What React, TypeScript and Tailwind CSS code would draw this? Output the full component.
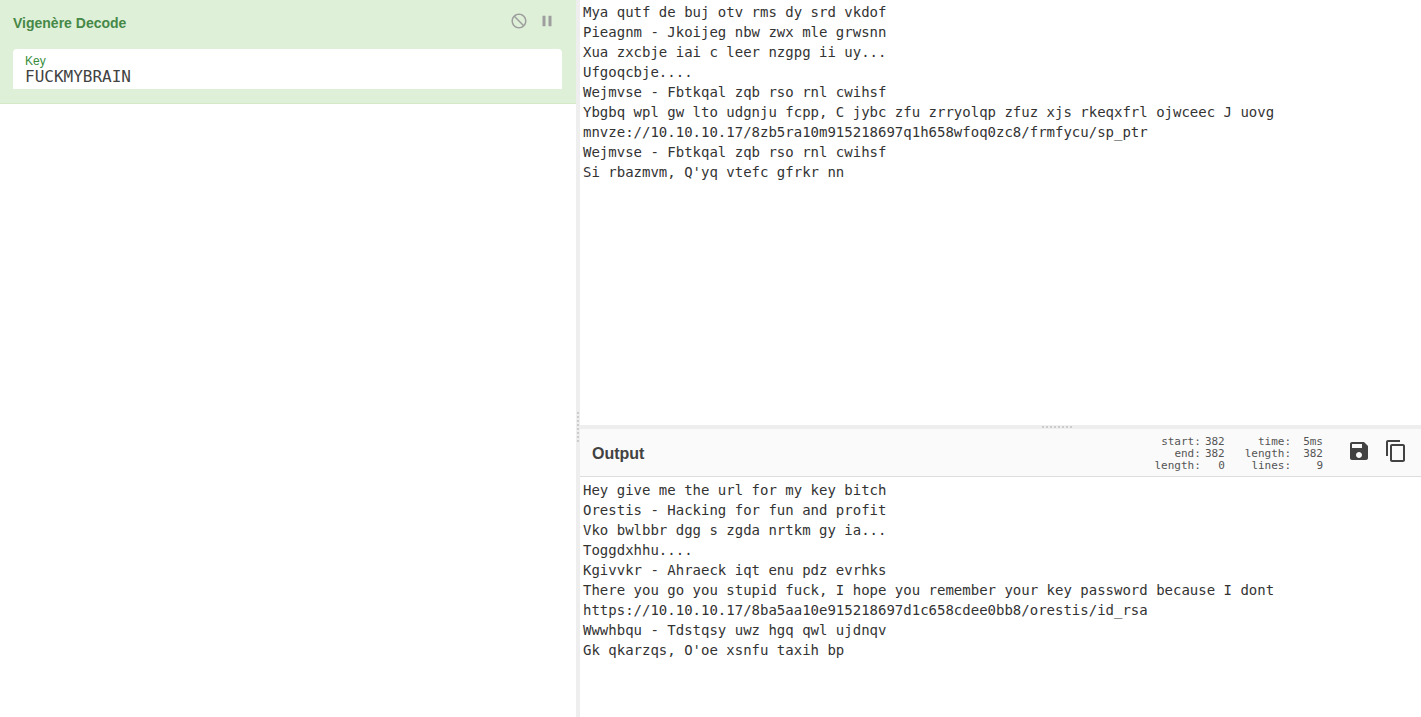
import React, { useState } from "react";

const INPUT_TEXT = `Mya qutf de buj otv rms dy srd vkdof
Pieagnm - Jkoijeg nbw zwx mle grwsnn
Xua zxcbje iai c leer nzgpg ii uy...
Ufgoqcbje....
Wejmvse - Fbtkqal zqb rso rnl cwihsf
Ybgbq wpl gw lto udgnju fcpp, C jybc zfu zrryolqp zfuz xjs rkeqxfrl ojwceec J uovg
mnvze://10.10.10.17/8zb5ra10m915218697q1h658wfoq0zc8/frmfycu/sp_ptr
Wejmvse - Fbtkqal zqb rso rnl cwihsf
Si rbazmvm, Q'yq vtefc gfrkr nn`;

const OUTPUT_TEXT = `Hey give me the url for my key bitch
Orestis - Hacking for fun and profit
Vko bwlbbr dgg s zgda nrtkm gy ia...
Toggdxhhu....
Kgivvkr - Ahraeck iqt enu pdz evrhks
There you go you stupid fuck, I hope you remember your key password because I dont
https://10.10.10.17/8ba5aa10e915218697d1c658cdee0bb8/orestis/id_rsa
Wwwhbqu - Tdstqsy uwz hgq qwl ujdnqv
Gk qkarzqs, O'oe xsnfu taxih bp`;

function Icon({ path, className }: { path: string; className: string }) {
  return (
    <svg viewBox="0 0 24 24" fill="currentColor" aria-hidden="true" className={className}>
      <path d={path} />
    </svg>
  );
}

const DISABLE =
  "M12 2C17.52 2 22 6.48 22 12s-4.48 10-10 10S2 17.52 2 12 6.48 2 12 2zM20 12c0-4.42-3.58-8-8-8-1.85 0-3.55.63-4.9 1.69L18.31 16.9C19.37 15.55 20 13.85 20 12zm-8 8c1.85 0 3.55-.63 4.9-1.69L5.69 7.1C4.63 8.45 4 10.15 4 12c0 4.42 3.58 8 8 8z";
const PAUSE = "M6 19h4V5H6v14zm8-14v14h4V5h-4z";
const SAVE =
  "M17 3H5c-1.11 0-2 .9-2 2v14c0 1.1.89 2 2 2h14c1.1 0 2-.9 2-2V7l-4-4zm-5 16c-1.66 0-3-1.34-3-3s1.34-3 3-3 3 1.34 3 3-1.34 3-3 3zm3-10H5V5h10v4z";
const COPY =
  "M16 1H4c-1.1 0-2 .9-2 2v14h2V3h12V1zm3 4H8c-1.1 0-2 .9-2 2v14c0 1.1.9 2 2 2h11c1.1 0 2-.9 2-2V7c0-1.1-.9-2-2-2zm0 16H8V7h11v14z";

function Stats({ rows, gap }: { rows: [string, string][]; gap: string }) {
  return (
    <dl
      className={`grid grid-cols-[auto_auto] text-right font-['DejaVu_Sans_Mono',monospace] text-[11px] leading-3 text-[#555] ${gap}`}
    >
      {rows.map(([label, value]) => (
        <React.Fragment key={label}>
          <dt>{label}:</dt>
          <dd>{value}</dd>
        </React.Fragment>
      ))}
    </dl>
  );
}

export default function App() {
  const [key, setKey] = useState("FUCKMYBRAIN");
  const [input, setInput] = useState(INPUT_TEXT);

  return (
    <div className="flex h-screen bg-white font-['Liberation_Sans',Arial,sans-serif] text-[#424242]">
      <section className="min-w-0 flex-[576]">
        <div className="border-b border-[#d6e9c6] bg-[#dff0d8] pt-3 pr-3.5 pb-3.5 pl-[13px]">
          <div className="flex items-start justify-between pr-1.5">
            <h2 className="text-sm leading-[22px] font-bold text-[#468847]">Vigenère Decode</h2>
            <div className="flex gap-2.5 text-[#9e9e9e]">
              <button type="button" aria-label="Disable operation">
                <Icon path={DISABLE} className="size-[18px]" />
              </button>
              <button type="button" aria-label="Set breakpoint">
                <Icon path={PAUSE} className="size-[18px]" />
              </button>
            </div>
          </div>
          <div className="mt-[15px] flex h-10 flex-col rounded-t bg-white px-3 pt-1">
            <label htmlFor="key" className="text-xs leading-4 text-[#388e3c]">
              Key
            </label>
            <input
              id="key"
              value={key}
              onChange={(e) => setKey(e.target.value)}
              className="h-3.5 w-full font-['DejaVu_Sans_Mono',monospace] text-base leading-3.5 outline-none"
            />
          </div>
        </div>
      </section>

      <div className="flex w-1 flex-col items-center justify-center bg-[#eee] pt-[137px]">
        <div className="h-[30px] border-l-2 border-dotted border-[#ccc]" />
      </div>

      <section className="flex min-w-0 flex-[841] flex-col">
        <div className="flex min-h-0 flex-[425] flex-col">
          <textarea
            aria-label="Input"
            spellCheck={false}
            value={input}
            onChange={(e) => setInput(e.target.value)}
            className="block min-h-0 w-full flex-1 resize-none px-[3px] pt-0.5 font-['DejaVu_Sans_Mono',monospace] text-sm leading-5 text-[#333] outline-none"
          />
        </div>
        <div className="flex h-1 shrink-0 items-center justify-center bg-[#eee] pl-[113px]">
          <div className="w-[30px] border-t-2 border-dotted border-[#ccc]" />
        </div>
        <div className="flex min-h-0 flex-[288] flex-col">
          <header className="flex h-12 shrink-0 items-center border-b border-[#ddd] bg-[#fafafa] pr-[13px] pl-3">
            <h2 className="flex-1 pt-0.5 text-base font-bold">Output</h2>
            <div className="flex gap-5 pt-0.5">
              <Stats gap="gap-x-1" rows={[["start", "382"], ["end", "382"], ["length", "0"]]} />
              <Stats gap="gap-x-3" rows={[["time", "5ms"], ["length", "382"], ["lines", "9"]]} />
            </div>
            <div className="ml-6 flex gap-[13px] pb-1">
              <button type="button" aria-label="Save output to file">
                <Icon path={SAVE} className="size-6" />
              </button>
              <button type="button" aria-label="Copy output to clipboard">
                <Icon path={COPY} className="size-6" />
              </button>
            </div>
          </header>
          <textarea
            aria-label="Output"
            readOnly
            value={OUTPUT_TEXT}
            className="block min-h-0 w-full flex-1 resize-none px-[3px] pt-[3px] font-['DejaVu_Sans_Mono',monospace] text-sm leading-5 text-[#333] outline-none"
          />
        </div>
      </section>
    </div>
  );
}
